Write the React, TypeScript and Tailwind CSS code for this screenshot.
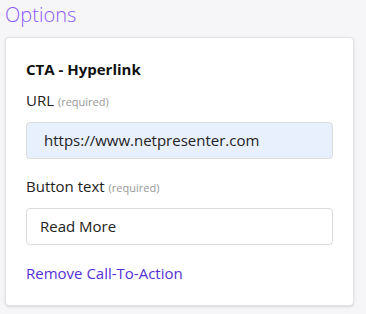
import React from "react";

const Field = ({ label, value, autofill }: { label: string; value: string; autofill?: boolean }) => (
  <div>
    <div className="text-[15px] leading-5 text-[#222]">
      {label} <span className="text-[11px] text-[#999]">(required)</span>
    </div>
    <div
      className={`mt-[10px] h-[37px] rounded border border-[#dcdcdc] flex items-center text-[15px] text-[#222] ${
        autofill ? "bg-[#e8f0fe] pl-[17px]" : "bg-white pl-[13px]"
      }`}
    >
      {value}
    </div>
  </div>
);

export default function App() {
  return (
    <div className="w-[366px] h-[314px] bg-[#f6f6f8] px-[5px] pt-[1px]" style={{ fontFamily: '"Open Sans", sans-serif' }}>
      <h2 className="text-[20px] leading-[28px] font-light text-[#8b5cf6]">Options</h2>
      <div className="mt-[8px] w-[349px] h-[269px] bg-white rounded border border-[#e2e2e2] shadow-sm px-[20px] pt-[21px]">
        <h3 className="text-[15px] leading-5 font-bold text-[#111]">CTA - Hyperlink</h3>
        <div className="mt-[11px] flex flex-col gap-[17px]">
          <Field label="URL" value="https://www.netpresenter.com" autofill />
          <Field label="Button text" value="Read More" />
        </div>
        <a className="block mt-[18px] text-[15px] leading-5 text-[#5530d6]">Remove Call-To-Action</a>
      </div>
    </div>
  );
}
